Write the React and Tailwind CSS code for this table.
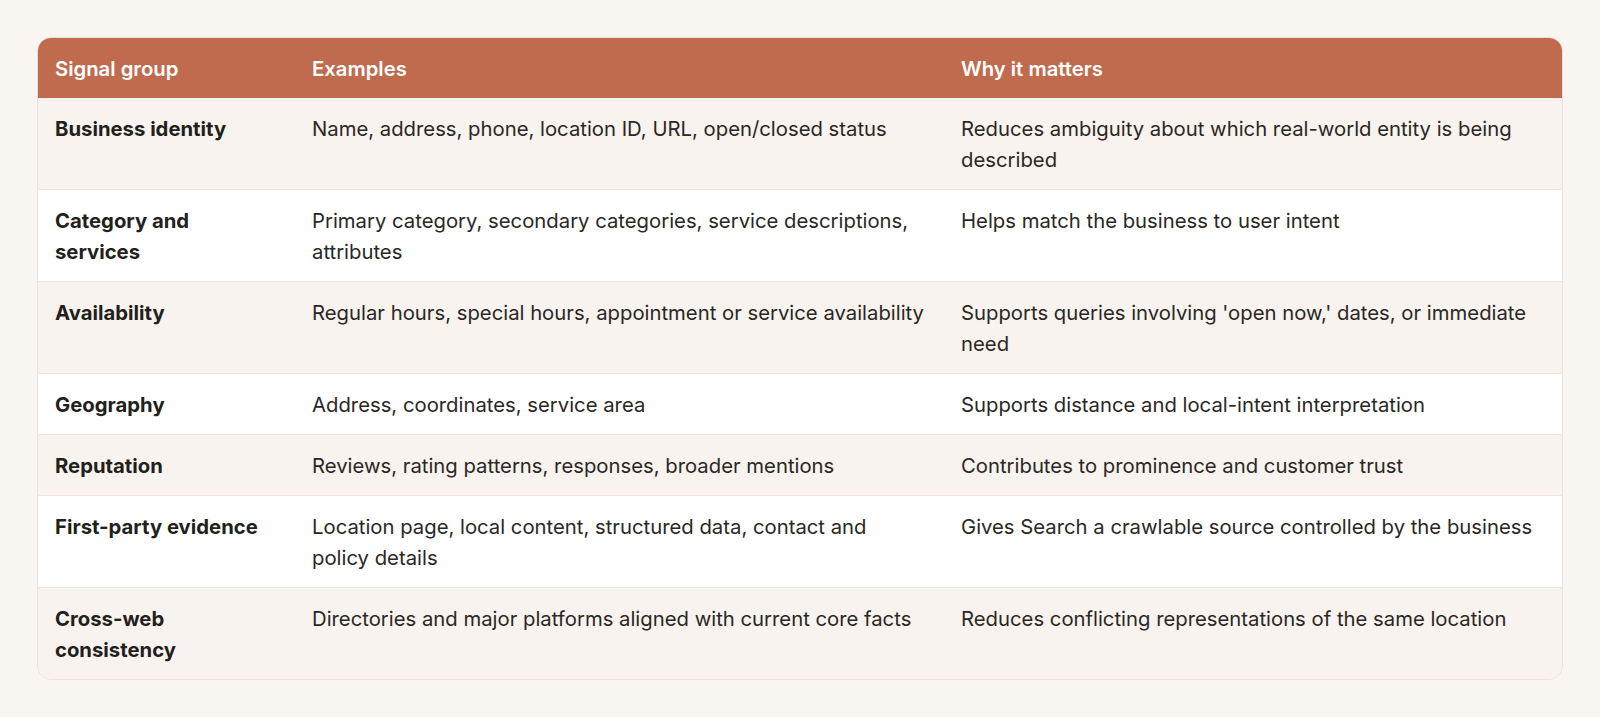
const rows = [
  ['Business identity', 'Name, address, phone, location ID, URL, open/closed status', 'Reduces ambiguity about which real-world entity is being described'],
  ['Category and services', 'Primary category, secondary categories, service descriptions, attributes', 'Helps match the business to user intent'],
  ['Availability', 'Regular hours, special hours, appointment or service availability', "Supports queries involving 'open now,' dates, or immediate need"],
  ['Geography', 'Address, coordinates, service area', 'Supports distance and local-intent interpretation'],
  ['Reputation', 'Reviews, rating patterns, responses, broader mentions', 'Contributes to prominence and customer trust'],
  ['First-party evidence', 'Location page, local content, structured data, contact and policy details', 'Gives Search a crawlable source controlled by the business'],
  ['Cross-web consistency', 'Directories and major platforms aligned with current core facts', 'Reduces conflicting representations of the same location'],
];

export default function App() {
  return (
    <div className="min-h-screen bg-[#f9f6f1] px-[37px] pt-[37px] pb-9 font-['Inter',sans-serif] text-[#221f1c]">
      <div className="overflow-hidden rounded-[14px] border border-[#e9e2da]">
        <table className="w-full table-fixed border-collapse text-left">
          <colgroup>
            <col className="w-[257px]" />
            <col className="w-[649px]" />
            <col />
          </colgroup>
          <thead>
            <tr className="bg-[#c06b4e] text-white">
              <th className="pl-[17px] pr-5 py-[14.5px] text-[20.3px] font-semibold leading-[31px]">Signal group</th>
              <th className="pl-[17px] pr-5 py-[14.5px] text-[20.3px] font-semibold leading-[31px]">Examples</th>
              <th className="pl-[17px] pr-5 py-[14.5px] text-[20.3px] font-semibold leading-[31px]">Why it matters</th>
            </tr>
          </thead>
          <tbody>
            {rows.map((r, i) => (
              <tr key={r[0]} className={`${i % 2 === 0 ? 'bg-[#f8f3ee]' : 'bg-white'} ${i > 0 ? 'border-t border-[#ebe5de]' : ''}`}>
                <td className="pl-[17px] pr-5 py-[14.5px] align-top text-[20.3px] font-bold leading-[31px]">{r[0]}</td>
                <td className="pl-[17px] pr-5 py-[14.5px] align-top text-[20.3px] leading-[31px] text-[#2a2724]">{r[1]}</td>
                <td className="pl-[17px] pr-5 py-[14.5px] align-top text-[20.3px] leading-[31px] text-[#2a2724]">{r[2]}</td>
              </tr>
            ))}
          </tbody>
        </table>
      </div>
    </div>
  );
}
